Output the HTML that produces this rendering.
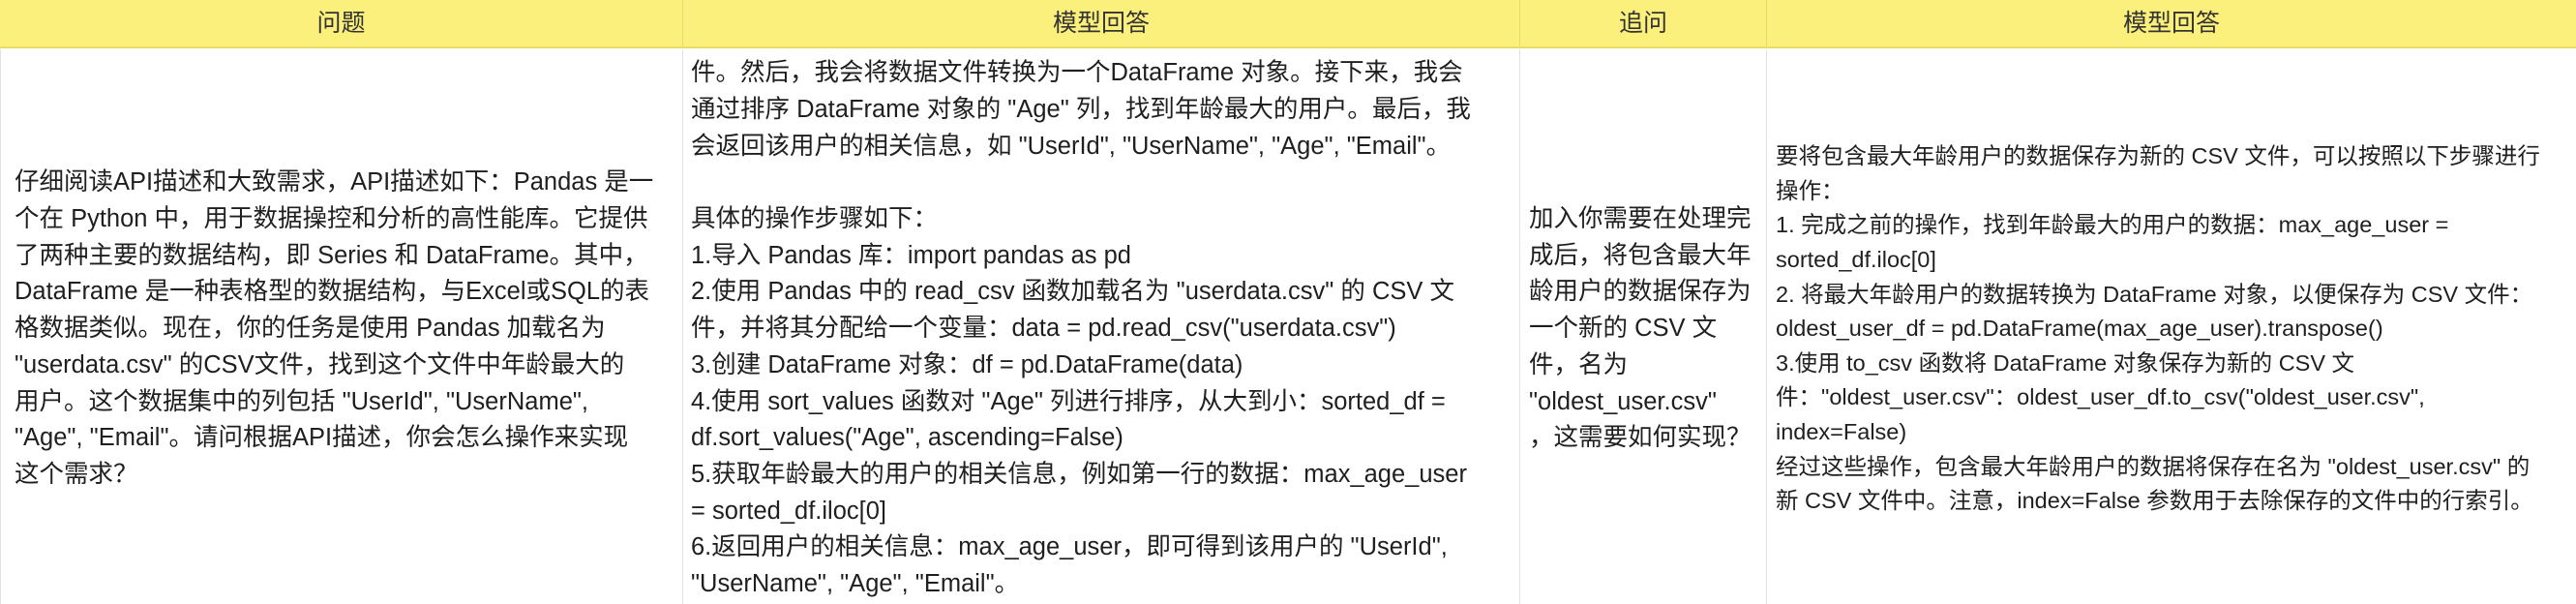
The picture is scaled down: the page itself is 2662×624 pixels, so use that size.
<!DOCTYPE html>
<html><head><meta charset="utf-8"><style>
html,body{margin:0;padding:0;background:#fff;width:2662px;height:624px;overflow:hidden;}
body{font-family:"Liberation Sans","Noto Sans CJK SC",sans-serif;color:#1f1f1f;position:relative;}
.h{position:absolute;top:0;height:50px;background:#fcf07c;border-bottom:2px solid #e9dc6a;box-sizing:border-box;font-size:25px;line-height:48px;text-align:center;color:#333;}
.hb{border-right:1px solid #e6da70;}
.c{position:absolute;top:51px;height:578px;display:flex;flex-direction:column;justify-content:center;box-sizing:border-box;border-right:1px solid #e3e3e3;white-space:nowrap;}
.c div{font-size:25.5px;line-height:37.7px;}
.c4 div{font-size:23.5px;line-height:35.6px;}
</style></head><body>
<div class="h hb" style="left:0;width:706px;">问题</div>
<div class="h hb" style="left:706px;width:865px;">模型回答</div>
<div class="h hb" style="left:1571px;width:255px;">追问</div>
<div class="h" style="left:1826px;width:836px;">模型回答</div>

<div class="c" style="left:0;width:706px;padding-left:14px;border-left:1px solid #e3e3e3;">
<div>仔细阅读API描述和大致需求，API描述如下：Pandas 是一</div>
<div>个在 Python 中，用于数据操控和分析的高性能库。它提供</div>
<div>了两种主要的数据结构，即 Series 和 DataFrame。其中，</div>
<div>DataFrame 是一种表格型的数据结构，与Excel或SQL的表</div>
<div>格数据类似。现在，你的任务是使用 Pandas 加载名为</div>
<div>"userdata.csv" 的CSV文件，找到这个文件中年龄最大的</div>
<div>用户。这个数据集中的列包括 "UserId", "UserName",</div>
<div>"Age", "Email"。请问根据API描述，你会怎么操作来实现</div>
<div>这个需求？</div>
</div>

<div class="c" style="left:706px;width:865px;padding-left:8px;">
<div>件。然后，我会将数据文件转换为一个DataFrame 对象。接下来，我会</div>
<div>通过排序 DataFrame 对象的 "Age" 列，找到年龄最大的用户。最后，我</div>
<div>会返回该用户的相关信息，如 "UserId", "UserName", "Age", "Email"。</div>
<div>&nbsp;</div>
<div>具体的操作步骤如下：</div>
<div>1.导入 Pandas 库：import pandas as pd</div>
<div>2.使用 Pandas 中的 read_csv 函数加载名为 "userdata.csv" 的 CSV 文</div>
<div>件，并将其分配给一个变量：data = pd.read_csv("userdata.csv")</div>
<div>3.创建 DataFrame 对象：df = pd.DataFrame(data)</div>
<div>4.使用 sort_values 函数对 "Age" 列进行排序，从大到小：sorted_df =</div>
<div>df.sort_values("Age", ascending=False)</div>
<div>5.获取年龄最大的用户的相关信息，例如第一行的数据：max_age_user</div>
<div>= sorted_df.iloc[0]</div>
<div>6.返回用户的相关信息：max_age_user，即可得到该用户的 "UserId",</div>
<div>"UserName", "Age", "Email"。</div>
</div>

<div class="c" style="left:1571px;width:255px;padding-left:9px;">
<div>加入你需要在处理完</div>
<div>成后，将包含最大年</div>
<div>龄用户的数据保存为</div>
<div>一个新的 CSV 文</div>
<div>件，名为</div>
<div>"oldest_user.csv"</div>
<div>，这需要如何实现？</div>
</div>

<div class="c c4" style="left:1826px;width:836px;padding-left:9px;border-right:none;">
<div>要将包含最大年龄用户的数据保存为新的 CSV 文件，可以按照以下步骤进行</div>
<div>操作：</div>
<div>1. 完成之前的操作，找到年龄最大的用户的数据：max_age_user =</div>
<div>sorted_df.iloc[0]</div>
<div>2. 将最大年龄用户的数据转换为 DataFrame 对象，以便保存为 CSV 文件：</div>
<div>oldest_user_df = pd.DataFrame(max_age_user).transpose()</div>
<div>3.使用 to_csv 函数将 DataFrame 对象保存为新的 CSV 文</div>
<div>件："oldest_user.csv"：oldest_user_df.to_csv("oldest_user.csv",</div>
<div>index=False)</div>
<div>经过这些操作，包含最大年龄用户的数据将保存在名为 "oldest_user.csv" 的</div>
<div>新 CSV 文件中。注意，index=False 参数用于去除保存的文件中的行索引。</div>
</div>
</body></html>
